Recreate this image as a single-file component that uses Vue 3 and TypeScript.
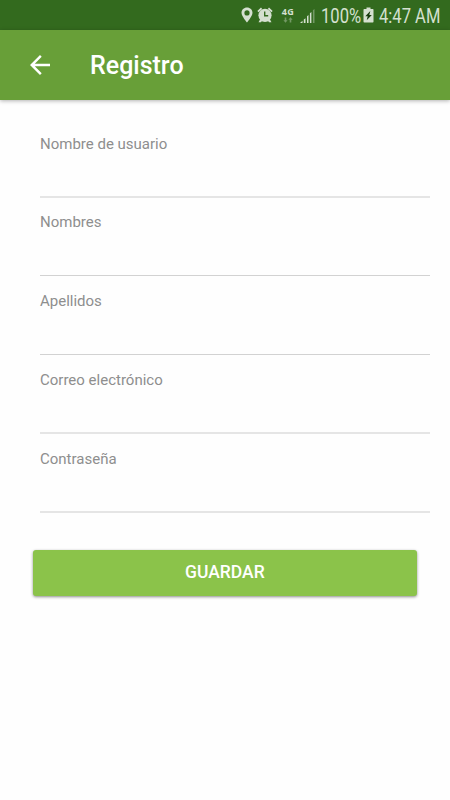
<script setup lang="ts">
import { reactive } from 'vue'

interface Field {
  key: string
  label: string
  type: string
  soft: boolean
}

const fields: Field[] = [
  { key: 'usuario', label: 'Nombre de usuario', type: 'text', soft: true },
  { key: 'nombres', label: 'Nombres', type: 'text', soft: false },
  { key: 'apellidos', label: 'Apellidos', type: 'text', soft: false },
  { key: 'correo', label: 'Correo electrónico', type: 'email', soft: true },
  { key: 'clave', label: 'Contraseña', type: 'password', soft: true },
]

const form = reactive<Record<string, string>>({
  usuario: '',
  nombres: '',
  apellidos: '',
  correo: '',
  clave: '',
})
</script>

<template>
  <div class="screen">
    <div class="status">
      <svg class="pin" viewBox="0 0 12 16" width="12" height="16">
        <path fill-rule="evenodd" d="M6 .5C2.800.5.5 2.900.5 5.800.5 9.300 6 15.500 6 15.500s5.500-6.200 5.500-9.700C11.500 2.900 9.200.5 6 .5zM6 3.300a2.600 2.600 0 1 1 0 5.200 2.600 2.600 0 0 1 0-5.200z" />
      </svg>
      <svg class="alarm" viewBox="0 0 16 16" width="16" height="16">
        <path d="M.3 4 4 .6l1.200 1.400-3.600 3.200zM15.700 4 12 .6l-1.200 1.400 3.600 3.200z" />
        <circle cx="8" cy="8.300" r="6.600" />
        <path d="M3.300 12 1.500 15.300h2.500l1.500-2zM12.700 12l1.800 3.300h-2.500l-1.500-2z" />
        <path class="hands" d="M7.700 4.500v4.300h3.500" />
      </svg>
      <div class="net">
        <span class="net-name">4G</span>
        <svg viewBox="0 0 10 6" width="10" height="6">
          <path d="M2.500 5.700.4 3.200h1.300V.5h1.600v2.700h1.300zM7.500.3 5.400 2.800h1.300v2.700h1.600V2.800h1.300z" />
        </svg>
      </div>
      <svg class="signal" viewBox="0 0 15 14" width="15" height="14">
        <path d="M0 14l2.500-2.300V14zM3.800 14v-3.500l1.700-1.300V14zM7 14V7.300l1.500-1.300V14zM9.900 14V4.300l1.500-1.300v11z" />
        <path opacity=".4" d="M12.900 14V1.300L14.500 0v14z" />
      </svg>
      <span class="pct"><span class="narrow">100%</span></span>
      <svg class="battery" viewBox="0 0 11 16" width="11" height="16">
        <path d="M3.500.5h4v1.500h2.300q.7 0 .7.700v12.100q0 .7-.7.700H1.200q-.7 0-.7-.7V2.700q0-.7.700-.7h2.300z" />
        <path class="bolt" d="M7.300 4 2.300 9.200h2.400l-1 4L8.800 8H6.300z" />
      </svg>
      <span class="time"><span class="narrow">4:47 AM</span></span>
    </div>

    <header class="bar">
      <svg class="back" viewBox="0 0 20 20" width="20" height="20">
        <path d="M20 8.800H4.800l6.900-7L10 0 0 10l10 10 1.700-1.800-6.900-7H20z" />
      </svg>
      <h1>Registro</h1>
    </header>

    <form class="form" @submit.prevent>
      <div v-for="f in fields" :key="f.key" class="field">
        <label :for="f.key">{{ f.label }}</label>
        <input :id="f.key" v-model="form[f.key]" :type="f.type" />
        <div class="line" :class="{ soft: f.soft }"></div>
      </div>
      <button type="submit">GUARDAR</button>
    </form>
  </div>
</template>

<style>
body {
  background: #fff;
}
</style>

<style scoped>
.screen {
  height: 800px;
  overflow: hidden;
  background: #fefefe;
  font-family: Roboto, "Liberation Sans", sans-serif;
}
.status {
  box-sizing: border-box;
  height: 30px;
  padding: 0 10px 0 241px;
  display: flex;
  align-items: center;
  background: #336a1e;
  color: #d5e0d0;
  fill: #d5e0d0;
}
.status svg {
  flex: none;
}
.alarm {
  margin-left: 4px;
}
.hands {
  fill: none;
  stroke: #336a1e;
  stroke-width: 1.400;
}
.net {
  width: 14px;
  margin-left: 8px;
  display: flex;
  flex-direction: column;
  align-items: center;
}
.net-name {
  font: 700 9px/9px "Open Sans", sans-serif;
  letter-spacing: 0.500px;
}
.net svg {
  margin-top: 1px;
  opacity: 0.4;
}
.signal {
  margin: 2px 0 0 5px;
}
.pct,
.time {
  flex: none;
  height: 30px;
  font-size: 19.500px;
  line-height: 32px;
  white-space: nowrap;
}
.pct {
  width: 39px;
  margin-left: 6px;
}
.time {
  width: 61px;
  margin-left: 5px;
}
.narrow {
  display: inline-block;
  transform: translateY(0.500px) scaleX(0.85);
  transform-origin: left center;
}
.battery {
  margin-left: 3px;
}
.bolt {
  fill: #173b0d;
}
.bar {
  height: 70px;
  display: flex;
  align-items: center;
  background: #689f38;
  box-shadow: 0 1px 4px rgba(0, 0, 0, 0.3);
}
.back {
  margin-left: 30px;
  fill: #fff;
}
h1 {
  margin: 2px 0 0 40px;
  color: #fff;
  font-size: 25px;
  font-weight: 500;
  line-height: 30px;
}
.form {
  padding: 33.500px 20px 0 40px;
}
.field {
  height: 78.750px;
  display: flex;
  flex-direction: column;
}
label {
  height: 20px;
  color: #8e8e8e;
  font-size: 15px;
  line-height: 20px;
}
input {
  height: 42.500px;
  padding: 0;
  box-sizing: border-box;
  border: 0;
  outline: 0;
  background: transparent;
  font: 16px Roboto, sans-serif;
}
.line {
  height: 1px;
  background: #d2d2d2;
}
.line.soft {
  height: 2px;
  background: #e5e5e5;
}
button {
  display: block;
  width: 384.500px;
  height: 45.500px;
  margin: 22.750px 0 0 -7.400px;
  padding: 0 0 2px;
  border: 0;
  border-radius: 3px;
  background: #8bc34a;
  box-shadow: 0 1px 3px rgba(0, 0, 0, 0.45);
  color: #fff;
  font: 500 17.500px/20px Roboto, sans-serif;
}
</style>
